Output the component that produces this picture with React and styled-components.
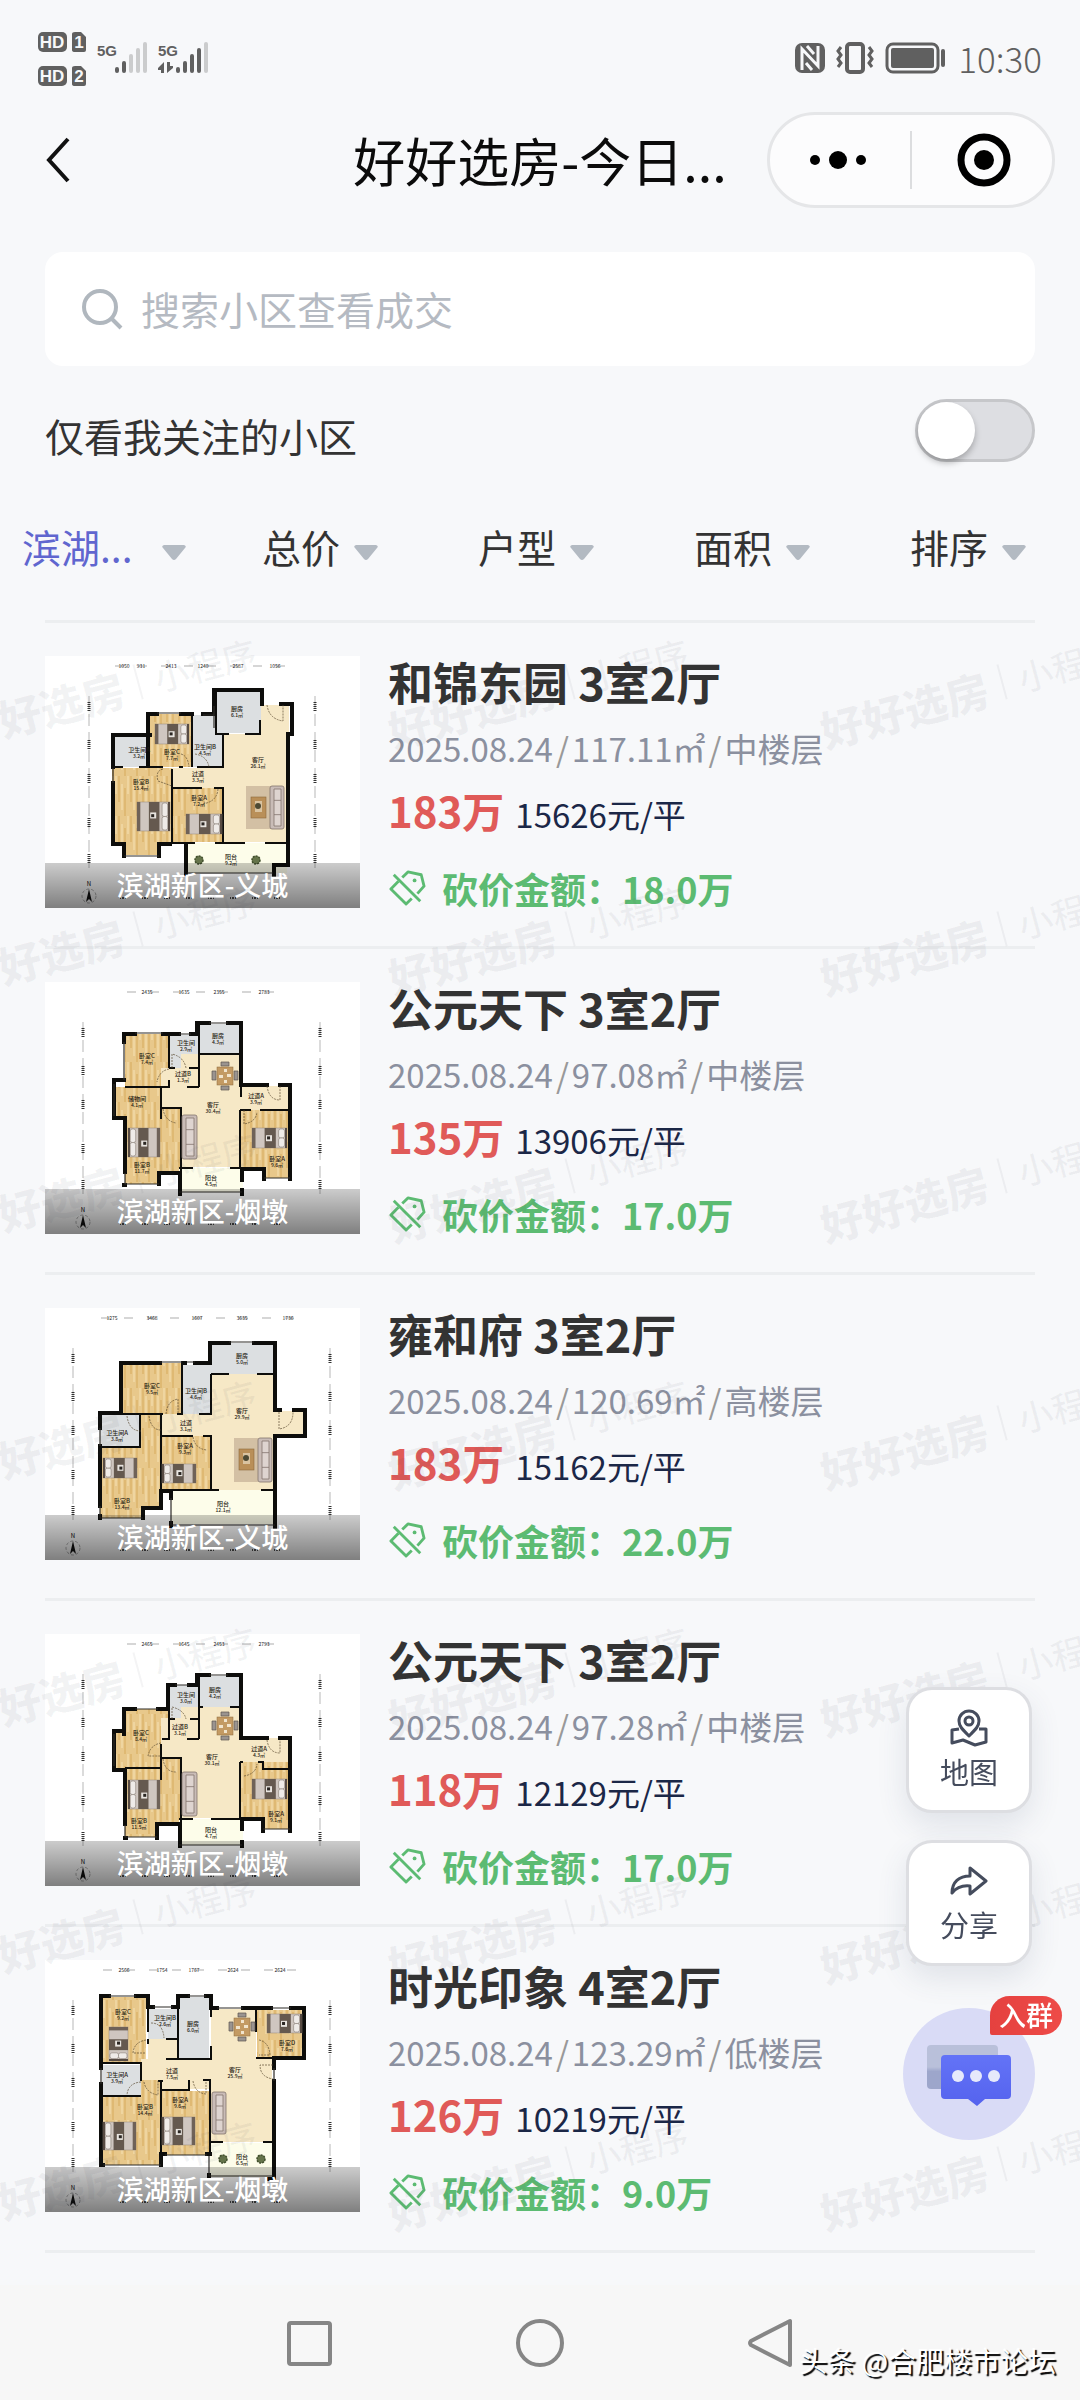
import { Fragment } from "react";
import styled, { createGlobalStyle } from "styled-components";

const GlobalStyle = createGlobalStyle`
    * {
        box-sizing: border-box;
    }
    body {
        margin: 0;
        background: #f7f8fa;
        color: #333333;
        font-family: "Noto Sans CJK SC", "Noto Sans", sans-serif;
    }
    button, input, select {
        font-family: inherit;
        color: inherit;
        margin: 0;
        padding: 0;
        border: 0;
        background: none;
        outline: none;
    }
    h1, h2, p, ul {
        margin: 0;
        padding: 0;
    }
`;

const Page = styled.div`
    display: flex;
    flex-direction: column;
    min-height: 100vh;
    overflow: hidden;
`;

const StatusBar = styled.div`
    display: flex;
    justify-content: space-between;
    align-items: center;
    height: 112px;
    padding: 4px 38px 0 38px;
    color: #606060;
`;

const StatusGroup = styled.div`
    display: flex;
    align-items: center;
    gap: 10px;
`;

const Clock = styled.span`
    margin-left: 2px;
    font-size: 35px;
    line-height: 40px;
    font-weight: 300;
`;

const Header = styled.header`
    display: grid;
    grid-template-columns: 288px 1fr 288px;
    align-items: center;
    padding: 0 25px;
`;

const BackButton = styled.button`
    display: flex;
    align-items: center;
    width: 80px;
    height: 96px;
    padding-left: 19px;
`;

const Title = styled.h1`
    color: #0b0b0b;
    font-size: 52px;
    line-height: 72px;
    font-weight: 400;
    text-align: center;
    white-space: nowrap;
`;

const Capsule = styled.div`
    display: flex;
    align-items: center;
    height: 96px;
    border: 3px solid #e5e6e8;
    border-radius: 48px;
    background: #fcfcfd;
`;

const CapsuleButton = styled.button`
    display: flex;
    flex: 1;
    align-items: center;
    justify-content: center;
    height: 58px;
    padding-right: 4px;
    & + & {
        padding: 0 0 0 4px;
        border-left: 2px solid #dcdddf;
    }
`;

const SearchBox = styled.label`
    display: flex;
    align-items: center;
    gap: 18px;
    height: 114px;
    margin: 44px 45px 0;
    padding: 0 36px;
    border-radius: 18px;
    background: #ffffff;
`;

const SearchInput = styled.input`
    flex: 1;
    min-width: 0;
    padding-bottom: 2px;
    font-size: 39px;
    line-height: 54px;
    &::placeholder {
        color: #b5bac2;
        opacity: 1;
    }
`;

const FollowRow = styled.div`
    display: flex;
    justify-content: space-between;
    align-items: flex-end;
    height: 63px;
    margin: 33px 45px 0;
`;

const FollowLabel = styled.label`
    font-size: 39px;
    line-height: 54px;
`;

const Switch = styled.input`
    appearance: none;
    display: flex;
    align-items: center;
    width: 120px;
    height: 63px;
    padding: 0 1px;
    border: 3px solid #c6c7ca;
    border-radius: 32px;
    background: #dddee2;
    &::before {
        content: "";
        width: 57px;
        height: 57px;
        margin-left: -1px;
        border-radius: 50%;
        background: #ffffff;
        box-shadow: 0 4px 6px rgba(0, 0, 0, 0.25);
    }
    &:checked {
        background: #5b62d6;
        justify-content: flex-end;
    }
`;

const Filters = styled.div`
    display: grid;
    grid-template-columns: repeat(5, 1fr);
    height: 158px;
    padding-top: 10px;
`;

const Filter = styled.label`
    display: flex;
    align-items: center;
    justify-content: center;
    gap: 12px;
    padding-right: 8px;
`;

const FilterSelect = styled.select`
    appearance: none;
    width: ${(props) => (props.$active ? "128px" : "80px")};
    height: 56px;
    font-size: 39px;
    line-height: 56px;
    color: ${(props) => (props.$active ? "#6066cf" : "#333333")};
`;

const Arrow = styled.svg`
    width: 24px;
    height: 15px;
    margin-top: 12px;
`;

const ListArea = styled.main`
    position: relative;
    padding: 0 45px 32px;
`;

const List = styled.ul`
    list-style: none;
    border-top: 3px solid #eceef0;
`;

const Card = styled.li`
    display: flex;
    gap: 28px;
    padding: 33px 0 38px;
    border-bottom: 3px solid #eceef0;
`;

const Thumb = styled.figure`
    position: relative;
    flex: none;
    width: 315px;
    height: 252px;
    margin: 0;
    background: #ffffff;
    svg {
        display: block;
    }
`;

const Caption = styled.figcaption`
    position: absolute;
    left: 0;
    right: 0;
    bottom: 0;
    height: 45px;
    color: #ffffff;
    font-size: 27px;
    line-height: 43px;
    font-weight: 500;
    text-align: center;
    background: linear-gradient(rgba(0, 0, 0, 0.2), rgba(0, 0, 0, 0.5));
`;

const Info = styled.div`
    flex: 1;
    white-space: nowrap;
`;

const Name = styled.h2`
    font-size: 45px;
    line-height: 52px;
    font-weight: 700;
`;

const Meta = styled.p`
    display: flex;
    margin: 20px 0;
    color: #8b909f;
    font-size: 33px;
    line-height: 40px;
`;

const Slash = styled.span`
    margin: 0 3px;
    color: #999999;
`;

const Price = styled.p`
    display: flex;
    align-items: baseline;
    gap: 11px;
    height: 48px;
    color: #1b2747;
    font-size: 33px;
    line-height: 44px;
    strong {
        color: #e05a58;
        font-size: 42px;
    }
`;

const Cut = styled.p`
    display: flex;
    align-items: center;
    gap: 16px;
    margin-top: 34px;
    color: #5cbb72;
    font-size: 36px;
    line-height: 36px;
    font-weight: 700;
`;

// repeated brand mark lying over the whole list
const Watermark = styled.div`
    position: absolute;
    top: -54px;
    bottom: 0;
    left: -108px;
    right: -108px;
    display: grid;
    grid-template-columns: repeat(auto-fill, 432px);
    grid-auto-rows: 247px;
    overflow: hidden;
    pointer-events: none;
    color: rgba(60, 64, 80, 0.06);
`;

const Mark = styled.div`
    display: flex;
    align-items: center;
    justify-content: center;
    gap: 15px;
    padding-right: 4px;
    font-size: 35px;
    line-height: 50px;
    font-weight: 500;
    white-space: nowrap;
    transform: rotate(-15deg);
    b {
        font-size: 43px;
        font-weight: 900;
    }
    i {
        width: 2px;
        height: 36px;
        background: currentColor;
    }
`;

const FloatStack = styled.aside`
    position: fixed;
    right: 45px;
    bottom: 260px;
    display: flex;
    flex-direction: column;
    align-items: center;
    gap: 27px;
`;

const FloatButton = styled.button`
    display: flex;
    flex-direction: column;
    align-items: center;
    justify-content: center;
    gap: 4px;
    width: 126px;
    height: 126px;
    border: 3px solid #dddee2;
    border-radius: 26px;
    color: #454c5d;
    font-size: 29px;
    line-height: 40px;
    background: #ffffff;
    box-shadow: 0 12px 30px rgba(60, 70, 110, 0.12);
`;

const ChatButton = styled.button`
    position: relative;
    width: 132px;
    height: 132px;
    margin-top: 15px;
    border-radius: 50%;
    background: #d9dbf6;
`;

const Badge = styled.span`
    position: absolute;
    top: -12px;
    right: -27px;
    width: 72px;
    height: 39px;
    border-radius: 20px 20px 20px 2px;
    color: #ffffff;
    font-size: 27px;
    line-height: 37px;
    font-weight: 500;
    background: linear-gradient(90deg, #e5413f, #ee4b48);
`;

const NavBar = styled.nav`
    position: relative;
    display: flex;
    flex: none;
    align-items: center;
    justify-content: center;
    gap: 181px;
    height: 115px;
    margin-top: auto;
    background: #f7f7f7;
`;

const NavButton = styled.button`
    display: flex;
    width: 50px;
    height: 50px;
`;

const Credit = styled.span`
    position: absolute;
    right: 24px;
    bottom: 20px;
    color: #ffffff;
    font-size: 28px;
    line-height: 40px;
    text-shadow: 2px 2px 1px #000000;
`;

const FLOORS = {
    wood: "url(#planks)",
    cream: "#f6e8c6",
    tile: "#dcdfe1",
    terrace: "#fdfdea",
};

const listings = [
    {
        name: "和锦东园 3室2厅",
        area: "117.11㎡",
        floor: "中楼层",
        price: "183万",
        unit: "15626元/平",
        cut: "18.0万",
        place: "滨湖新区-义城",
        plan: {
            floors: [
                ["wood", 67, 112, 60, 75], ["wood", 79, 186, 34, 13], ["wood", 103, 58, 44, 53],
                ["tile", 68, 80, 36, 31], ["tile", 148, 59, 30, 52], ["tile", 170, 35, 46, 42],
                ["cream", 178, 78, 64, 108], ["cream", 216, 49, 28, 31], ["cream", 127, 112, 52, 20],
                ["wood", 127, 132, 51, 54], ["terrace", 142, 187, 100, 30],
            ],
            walls: "M105 79H94V79H68V111M68 127V188H79V200M114 200V188H125M103 110V58H112M136 58H147M158 58H169V34H217V48M236 48H247V78H243V209H229V219M141 188V218",
            thin: "M67 111H78M94 111H118M134 111H138M152 111H178V78M147 58V111M171 34V78H184M200 78H215V64M127 113V186M127 132H157M169 132H178V186M127 187H150M170 187H200M220 187H242M104 77V111",
            windows: "M112 57H136M158 59H169M79 200H114M68 112V127M142 217H228M169 50V72",
            doors: "M118 113q-8 2 -5 12l14 5M222 49q2 14 16 16V49M136 98q7 2 8 13M150 98q12 2 14 13M173 133q-1 13 -16 15",
            beds: [[110, 68, 34, 20, 0], [92, 146, 33, 29, 0], [141, 158, 36, 20, 0]],
            sofas: [[225, 130, 14, 43]],
            rugs: [[201, 130, 26, 43]],
            plants: [[154, 204], [211, 204]],
            labels: [[192, 55, "厨房", "6.1㎡"], [127, 98, "卧室C", "7.7㎡"], [160, 93, "卫生间B", "4.5㎡"], [94, 96, "卫生间A", "3.2㎡"], [96, 128, "卧室B", "15.4㎡"], [153, 120, "过道", "3.3㎡"], [154, 144, "卧室A", "7.2㎡"], [213, 106, "客厅", "26.1㎡"], [186, 203, "阳台", "9.2㎡"]],
            top: [[79, "1050"], [96, "931"], [126, "2413"], [158, "1240"], [193, "2587"], [230, "1056"]],
            span: [70, 245],
            sides: [44, 270],
        },
    },
    {
        name: "公元天下 3室2厅",
        area: "97.08㎡",
        floor: "中楼层",
        price: "135万",
        unit: "13906元/平",
        cut: "17.0万",
        place: "滨湖新区-烟墩",
        plan: {
            floors: [
                ["wood", 80, 52, 44, 53], ["tile", 125, 53, 28, 33], ["cream", 116, 86, 38, 40],
                ["tile", 153, 42, 42, 30], ["cream", 136, 72, 60, 113], ["cream", 195, 104, 50, 24],
                ["wood", 70, 105, 46, 32], ["wood", 80, 126, 56, 65], ["wood", 80, 190, 35, 12],
                ["wood", 196, 128, 48, 60], ["wood", 219, 186, 26, 10], ["terrace", 134, 186, 64, 24],
            ],
            walls: "M79 60V52H90M118 52H134M146 52H152V41H164M183 41H196V103H222M235 103H245V197M219 197V187H197V198M79 98H69V136H80V190M79 203H80M114 202V191H135V212M197 208V212",
            thin: "M124 52V86M124 86H130M144 86H153M154 41V105M154 72H195M80 105H124V98M142 105H154M116 105V137M116 126H136V191M196 105V115M195 128H206M215 128H245M195 128V186M134 186H148M185 186H197",
            windows: "M90 51H118M79 60V98M134 52H146M164 41H183M69 102V134M80 191V202H114M134 210H197M219 196H245",
            doors: "M127 86V72q12 3 14 14M124 87q-10 2 -12 13M118 127q2 12 13 14M222 104q2 14 13 14V104M199 128v14q12 -2 13 -12",
            beds: [[83, 146, 32, 29, 180], [207, 146, 35, 20, 0]],
            sofas: [[137, 133, 15, 44]],
            dining: [[180, 94]],
            labels: [[102, 76, "卧室C", "7.4㎡"], [141, 63, "卫生间", "2.9㎡"], [173, 56, "厨房", "4.3㎡"], [138, 94, "过道B", "1.3㎡"], [92, 119, "储物间", "4.1㎡"], [168, 125, "客厅", "30.4㎡"], [211, 116, "过道A", "3.9㎡"], [97, 185, "卧室B", "11.7㎡"], [232, 179, "卧室A", "9.6㎡"], [166, 198, "阳台", "4.5㎡"]],
            top: [[102, "2435"], [139, "1635"], [174, "2355"], [219, "2783"]],
            span: [82, 242],
            sides: [38, 275],
        },
    },
    {
        name: "雍和府 3室2厅",
        area: "120.69㎡",
        floor: "高楼层",
        price: "183万",
        unit: "15162元/平",
        cut: "22.0万",
        place: "滨湖新区-义城",
        plan: {
            floors: [
                ["wood", 76, 55, 60, 52], ["tile", 137, 57, 29, 49], ["tile", 166, 35, 63, 31],
                ["cream", 166, 66, 64, 116], ["cream", 229, 103, 31, 24], ["tile", 55, 107, 40, 32],
                ["wood", 95, 107, 21, 76], ["wood", 55, 140, 44, 70], ["wood", 98, 180, 17, 20],
                ["cream", 116, 106, 50, 22], ["wood", 116, 128, 50, 54], ["terrace", 126, 182, 103, 34],
            ],
            walls: "M115 55H76V105H55V120M55 138V198M55 208V210M98 210V200H116V183H126V190M126 215V218M138 55H140M150 55H165V35H184M209 35H230V102H235M249 102H260V128H230V219",
            thin: "M76 106H118M132 106H138M154 106H166V66M137 55V106M166 66H184M212 66H229M95 107V139H55M116 106V183M116 128H148M158 128H166V182H116M174 182H167M216 182H230",
            windows: "M115 54H137M142 54H150M184 34H209M55 120V138M55 198V210H98M126 190V217H230",
            doors: "M82 108q2 15 14 15M104 108q2 14 12 14M121 106q1 -13 12 -15V106M148 129q2 12 14 13M234 104v17q14 -2 14 -17",
            beds: [[58, 150, 34, 20, 180], [117, 156, 34, 19, 180]],
            sofas: [[213, 130, 14, 44]],
            rugs: [[189, 130, 24, 44]],
            labels: [[107, 80, "卧室C", "9.5㎡"], [151, 85, "卫生间B", "4.6㎡"], [197, 50, "厨房", "5.0㎡"], [197, 105, "客厅", "29.9㎡"], [72, 127, "卫生间A", "3.8㎡"], [141, 117, "过道", "3.1㎡"], [140, 140, "卧室A", "9.3㎡"], [77, 195, "卧室B", "13.4㎡"], [178, 198, "阳台", "12.1㎡"]],
            top: [[67, "1275"], [107, "3468"], [152, "1607"], [197, "3635"], [243, "1736"]],
            span: [56, 258],
            sides: [28, 285],
        },
    },
    {
        name: "公元天下 3室2厅",
        area: "97.28㎡",
        floor: "中楼层",
        price: "118万",
        unit: "12129元/平",
        cut: "17.0万",
        place: "滨湖新区-烟墩",
        plan: {
            floors: [
                ["wood", 80, 75, 43, 58], ["wood", 70, 98, 12, 36], ["tile", 123, 51, 30, 33],
                ["cream", 116, 84, 38, 40], ["tile", 153, 42, 42, 31], ["cream", 136, 73, 60, 111],
                ["cream", 195, 104, 50, 31], ["wood", 80, 124, 56, 66], ["wood", 80, 189, 33, 14],
                ["wood", 196, 128, 48, 58], ["wood", 218, 184, 27, 11], ["terrace", 134, 185, 64, 26],
            ],
            walls: "M79 100V75H90M113 75H123V51H130M144 51H152V41H164M183 41H196V104H222M235 104H245V197M218 197V185H197V195M79 97H69V136H80V190M80 204H81M112 204V190H135V212M197 208V212",
            thin: "M124 51V105H117M124 85H130M145 85H153M154 41V105M154 73H158M185 73H195M142 105H154M116 110V146M80 134H116M116 124H136V190M195 128H198M213 128H218V135H245M195 128V185M134 185H148M166 185H197",
            windows: "M90 75H113M130 51H144M164 41H183M69 100V132M80 191V203H112M134 211H197M218 195H245",
            doors: "M127 85V73q12 3 14 12M116 109q-11 2 -13 13h13M118 125q2 13 13 13M222 106q2 13 13 13V106M199 142q12 -2 13 -12",
            beds: [[83, 146, 32, 29, 180], [207, 145, 35, 20, 0]],
            sofas: [[137, 138, 15, 44]],
            dining: [[180, 92]],
            labels: [[96, 101, "卧室C", "8.4㎡"], [141, 63, "卫生间", "3.0㎡"], [170, 58, "厨房", "4.2㎡"], [135, 95, "过道B", "3.1㎡"], [167, 125, "客厅", "30.1㎡"], [214, 117, "过道A", "4.3㎡"], [94, 189, "卧室B", "11.5㎡"], [231, 182, "卧室A", "9.1㎡"], [166, 198, "阳台", "4.7㎡"]],
            top: [[102, "2465"], [139, "1645"], [174, "2453"], [219, "2793"]],
            span: [82, 242],
            sides: [38, 275],
        },
    },
    {
        name: "时光印象 4室2厅",
        area: "123.29㎡",
        floor: "低楼层",
        price: "126万",
        unit: "10219元/平",
        cut: "9.0万",
        place: "滨湖新区-烟墩",
        plan: {
            floors: [
                ["wood", 57, 37, 44, 66], ["tile", 103, 49, 29, 30], ["tile", 134, 37, 30, 61],
                ["cream", 166, 49, 45, 133], ["cream", 103, 79, 30, 20], ["cream", 96, 99, 131, 30],
                ["cream", 166, 120, 61, 62], ["wood", 212, 50, 46, 47], ["tile", 57, 105, 39, 30],
                ["wood", 96, 120, 21, 20], ["wood", 57, 136, 59, 69], ["wood", 117, 131, 48, 64],
                ["terrace", 165, 183, 63, 34],
            ],
            walls: "M64 36H56V108M91 36H103V47H108M128 47H133V36H143M161 36H166V48H172M198 48H226M246 48H259V98H229V108M229 121V219H224M56 124V205H58M116 205V194H120M162 194H165M164 215V218",
            thin: "M103 48V72M56 103H96V121M56 136H96M133 36V99M121 99H166V86M103 79V84M121 79H133M166 48V57M211 48V72M211 98H230M116 121V205M113 121H118M117 130H144V120M144 130V126M158 120H165V196M165 182H178M218 182H228",
            windows: "M64 36H91M108 47H128M143 36H161M172 48H198M226 48H246M56 108V124M58 205H116M120 195H162M164 196V216H228M229 108V121",
            doors: "M106 63q12 0 13 15M101 80q-12 2 -13 13h13M96 122q-13 1 -14 13M99 122q2 11 14 13V121M148 121q2 12 13 13V121M214 80q10 2 11 15h-11M228 105h-13q0 12 13 14",
            beds: [[64, 67, 19, 34, 90], [222, 54, 35, 19, 0], [58, 162, 33, 28, 180], [117, 157, 33, 28, 180]],
            sofas: [[167, 132, 14, 42]],
            dining: [[197, 67]],
            plants: [[178, 199], [216, 199]],
            labels: [[78, 54, "卧室C", "9.2㎡"], [120, 60, "卫生间B", "2.6㎡"], [148, 66, "厨房", "6.0㎡"], [242, 85, "卧室D", "7.6㎡"], [72, 117, "卫生间A", "3.9㎡"], [127, 113, "过道", "7.5㎡"], [190, 112, "客厅", "25.9㎡"], [100, 149, "卧室B", "14.4㎡"], [135, 142, "卧室A", "9.6㎡"], [197, 199, "阳台", "6.5㎡"]],
            top: [[79, "2566"], [117, "1754"], [149, "1767"], [188, "2624"], [235, "2624"]],
            span: [58, 257],
            sides: [28, 285],
        },
    },
];

const filters = [
    { label: "区域", value: "滨湖...", active: true },
    { label: "总价", value: "总价" },
    { label: "户型", value: "户型" },
    { label: "面积", value: "面积" },
    { label: "排序", value: "排序" },
];

// the pillow end is on the right, turn is in degrees
const Bed = ({ box: [x, y, w, h, turn] }) => {
    const long = turn === 90 ? h : w;
    const wide = turn === 90 ? w : h;
    return (
        <g transform={`translate(${x + w / 2} ${y + h / 2}) rotate(${turn}) translate(${-long / 2} ${-wide / 2})`}>
            <rect width={long} height={wide} fill="#cfc6c0" stroke="#93877c" strokeWidth="0.5" />
            <rect width={long * 0.1} height={wide} fill="#6f6258" />
            <rect x={long * 0.36} width={long * 0.32} height={wide} fill="#65594f" />
            <rect x={long * 0.4} y={wide * 0.36} width="6" height="6" fill="#e9e5e0" />
            <rect x={long * 0.43} y={wide * 0.42} width="3" height="3" fill="#2b2622" />
            <rect x={long * 0.76} y="1" width={long * 0.17} height={wide / 2 - 1} rx="2" fill="#efebe8" stroke="#877c73" strokeWidth="0.6" />
            <rect x={long * 0.76} y={wide / 2} width={long * 0.17} height={wide / 2 - 1} rx="2" fill="#efebe8" stroke="#877c73" strokeWidth="0.6" />
            <rect x={long - 2} width="2" height={wide} fill="#574b43" />
        </g>
    );
};

const Sofa = ({ box: [x, y, w, h] }) => (
    <g fill="#c9bcb7" stroke="#83746d" strokeWidth="0.8">
        <rect x={x} y={y} width={w} height={h} rx="2" />
        <path d={`M${x + 4} ${y + 3}h${w - 7}v${h - 6}h${7 - w}zM${x + 4} ${y + h / 3}h${w - 7}M${x + 4} ${y + (h * 2) / 3}h${w - 7}`} fill="#ded4d0" />
    </g>
);

const Dining = ({ at: [x, y] }) => (
    <g transform={`translate(${x} ${y})`}>
        <path d="M-4 -14h8v4h-8zM-4 10h8v4h-8zM-13 -5h4v9h-4zM9 -5h4v9h-4z" fill="#9a9490" stroke="#5d554e" strokeWidth="0.7" />
        <rect x="-8" y="-9" width="16" height="18" fill="#c39a63" stroke="#8d6a3c" strokeWidth="0.5" />
        <path d="M-6 -1h4v3h-4zM2 -2h4v3h-4zM-1 -7h3v3h-3zM-1 4h3v3h-3z" fill="#f1e4cc" />
    </g>
);

const FloorPlan = ({ plan }) => (
    <svg width="315" height="252" viewBox="0 0 315 252" aria-hidden="true" fontSize="6" textAnchor="middle">
        <defs>
            <pattern id="planks" width="12" height="40" patternUnits="userSpaceOnUse">
                <rect width="12" height="40" fill="#e8c88b" />
                <path d="M2 0V26M8 12V40" stroke="#dfb973" strokeWidth="2" />
                <path d="M5 8V34M11 0V18" stroke="#efd5a0" strokeWidth="2" />
            </pattern>
        </defs>
        {plan.floors.map(([kind, x, y, w, h], i) => (
            <rect key={i} x={x} y={y} width={w} height={h} fill={FLOORS[kind]} />
        ))}
        {plan.rugs?.map(([x, y, w, h]) => (
            <g key={x}>
                <rect x={x} y={y} width={w} height={h} fill="#d3c0a4" />
                <rect x={x + 5} y={y + 11} width="15" height="21" fill="#b98f58" stroke="#8d6a3c" strokeWidth="0.6" />
                <rect x={x + 9} y={y + 15} width="7" height="11" fill="#d9c3a0" />
                <circle cx={x + 12} cy={y + 20} r="3" fill="#4d4a34" />
            </g>
        ))}
        <path d={plan.walls} fill="none" stroke="#0d0d0b" strokeWidth="4" strokeLinecap="square" />
        <path d={plan.thin} fill="none" stroke="#0d0d0b" strokeWidth="2" />
        <path d={plan.windows} fill="none" stroke="#2d2b27" strokeWidth="1.2" />
        <path d={plan.doors} fill="none" stroke="#5b4c32" strokeWidth="0.7" strokeDasharray="2 1" />
        {plan.beds.map((box) => <Bed key={box.join()} box={box} />)}
        {plan.sofas.map((box) => <Sofa key={box.join()} box={box} />)}
        {plan.dining?.map((at) => <Dining key={at.join()} at={at} />)}
        {plan.plants?.map(([x, y]) => (
            <circle key={x} cx={x} cy={y} r="4" fill="#65744a" stroke="#3f4d2b" strokeWidth="1.5" strokeDasharray="2 1" />
        ))}
        <g fill="#1f1a12" fontWeight="500">
            {plan.labels.map(([x, y, name, size]) => (
                <Fragment key={x + name}>
                    <text x={x} y={y}>{name}</text>
                    <text x={x} y={y + 6} fontSize="5">{size}</text>
                </Fragment>
            ))}
        </g>
        <path d={`M${plan.span[0]} 10H${plan.span[1]}`} stroke="#8b8b8b" strokeWidth="0.7" strokeDasharray="9 14" />
        <g fill="#222222" fontSize="5">
            {plan.top.map(([x, size]) => <text key={x} x={x} y="12">{size}</text>)}
        </g>
        {plan.sides.map((x) => (
            <g key={x}>
                <path d={`M${x} 40V212`} stroke="#9a9a9a" strokeWidth="0.7" strokeDasharray="12 6" />
                <path d={`M${x} 46V56M${x} 84V93M${x} 118V127M${x} 162V172M${x} 198V208`} stroke="#333333" strokeWidth="3" strokeDasharray="1 1" />
            </g>
        ))}
        <g transform={`translate(${plan.sides[0]} 240)`}>
            <circle r="7" fill="none" stroke="#777777" strokeWidth="0.6" strokeDasharray="3 2" />
            <path d="M0 -7L3 6L0 3L-3 6Z" fill="#111111" />
            <text y="-10" fontSize="6">N</text>
        </g>
        <path d="M75 242H240" stroke="#555555" strokeWidth="2" strokeDasharray="1 1 2 1 1 16" />
    </svg>
);

const CutIcon = () => (
    <svg width="38" height="36" viewBox="0 0 40 38" fill="none" stroke="currentColor" strokeWidth="3" strokeLinejoin="round" aria-hidden="true">
        <path d="M15 8L21 2L35 5L38 17L31 25M11 12L3 20L19 36L25 30" />
        <path d="M6 5L34 33" />
        <circle cx="28" cy="11" r="2" fill="currentColor" stroke="none" />
    </svg>
);

const Listing = ({ item }) => (
    <Card>
        <Thumb>
            <FloorPlan plan={item.plan} />
            <Caption>{item.place}</Caption>
        </Thumb>
        <Info>
            <Name>{item.name}</Name>
            <Meta>
                <span>2025.08.24</span>
                <Slash>/</Slash>
                <span>{item.area}</span>
                <Slash>/</Slash>
                <span>{item.floor}</span>
            </Meta>
            <Price>
                <strong>{item.price}</strong>
                <span>{item.unit}</span>
            </Price>
            <Cut>
                <CutIcon />
                <span>砍价金额：{item.cut}</span>
            </Cut>
        </Info>
    </Card>
);

const SignalIcons = () => (
    <svg width="172" height="56" viewBox="38 30 172 56" fill="#606060" fontFamily="'Liberation Sans Narrow', 'Liberation Sans', sans-serif" fontWeight="700" aria-label="信号">
        <rect x="38" y="32" width="29" height="20" rx="5" />
        <path d="M72 34q0 -2 3 -2h6l5 5v13q0 2 -2 2h-9q-3 0 -3 -2z" />
        <rect x="38" y="66" width="29" height="20" rx="5" />
        <path d="M72 68q0 -2 3 -2h6l5 5v13q0 2 -2 2h-9q-3 0 -3 -2z" />
        <g fill="#f7f8fa" fontSize="17" textAnchor="middle">
            <text x="52" y="48">HD</text>
            <text x="79" y="48">1</text>
            <text x="52" y="82">HD</text>
            <text x="79" y="82">2</text>
        </g>
        <text x="97" y="56" fontSize="15">5G</text>
        <text x="158" y="56" fontSize="15">5G</text>
        <path d="M117 69v2M124 63v8M178 69v2M185 63v8M192 56v15M199 50v21" fill="none" stroke="#606060" strokeWidth="4" strokeLinecap="round" />
        <path d="M131 56v15M138 50v21M145 44v27M206 44v27" fill="none" stroke="#cbcccd" strokeWidth="4" strokeLinecap="round" />
        <path d="M164 73V62L158 68V70H161V73ZM167 62V73L173 68V66H170V62Z" />
    </svg>
);

const DeviceIcons = () => (
    <svg width="152" height="34" viewBox="794 41 152 34" fill="none" stroke="#606060" aria-label="设备状态">
        <rect x="795" y="43" width="30" height="30" rx="7" fill="#606060" stroke="none" />
        <path d="M802 70V49L818 66V46M807 46L814 54M806 63L812 70" stroke="#f7f8fa" strokeWidth="3" />
        <rect x="847" y="44" width="16" height="28" rx="3" strokeWidth="4" />
        <path d="M841 47l-3 4l3 4l-3 4l3 4l-3 4M869 47l3 4l-3 4l3 4l-3 4l3 4" strokeWidth="3" />
        <rect x="887" y="44" width="51" height="28" rx="6" strokeWidth="3" />
        <rect x="891" y="48" width="43" height="20" rx="2" fill="#606060" stroke="none" />
        <path d="M943 51v14" strokeWidth="4" strokeLinecap="round" />
    </svg>
);

const ChatIcon = () => (
    <svg width="132" height="132" viewBox="0 0 132 132" aria-hidden="true">
        <defs>
            <linearGradient id="back" x1="0" y1="0" x2="0" y2="1">
                <stop offset="0.5" stopColor="#b9c0da" />
                <stop offset="0.6" stopColor="#9da6cb" />
            </linearGradient>
            <linearGradient id="front" x1="0" y1="0" x2="0" y2="1">
                <stop offset="0" stopColor="#6373f7" />
                <stop offset="1" stopColor="#5563ee" />
            </linearGradient>
        </defs>
        <rect x="24" y="37" width="71" height="44" rx="4" fill="url(#back)" />
        <path d="M42 47h62q4 0 4 4v36q0 4 -4 4h-22l-8 7l-9 -7h-23q-4 0 -4 -4v-36q0 -4 4 -4z" fill="url(#front)" />
        <g fill="#e6e9fb">
            <circle cx="55" cy="68" r="6" />
            <circle cx="73" cy="68" r="6" />
            <circle cx="91" cy="68" r="6" />
        </g>
    </svg>
);

const App = () => (
    <Page>
        <GlobalStyle />
        <StatusBar>
            <SignalIcons />
            <StatusGroup>
                <DeviceIcons />
                <Clock>10:30</Clock>
            </StatusGroup>
        </StatusBar>
        <Header>
            <BackButton aria-label="返回">
                <svg width="28" height="48" viewBox="0 0 28 48" fill="none" stroke="#111111" strokeWidth="4">
                    <path d="M24 3L5 24L24 45" />
                </svg>
            </BackButton>
            <Title>好好选房-今日...</Title>
            <Capsule>
                <CapsuleButton aria-label="更多">
                    <svg width="58" height="20" viewBox="0 0 58 20">
                        <circle cx="6" cy="10" r="5" />
                        <circle cx="29" cy="10" r="9" />
                        <circle cx="52" cy="10" r="5" />
                    </svg>
                </CapsuleButton>
                <CapsuleButton aria-label="关闭">
                    <svg width="54" height="54" viewBox="0 0 54 54">
                        <circle cx="27" cy="27" r="23" fill="none" stroke="#000000" strokeWidth="7" />
                        <circle cx="27" cy="27" r="10" />
                    </svg>
                </CapsuleButton>
            </Capsule>
        </Header>
        <SearchBox>
            <svg width="42" height="42" viewBox="0 0 42 42" fill="none" stroke="#b0b7be" strokeWidth="4" aria-hidden="true">
                <circle cx="19" cy="19" r="16" />
                <path d="M31 31L40 40" />
            </svg>
            <SearchInput type="text" placeholder="搜索小区查看成交" aria-label="搜索小区" />
        </SearchBox>
        <FollowRow>
            <FollowLabel htmlFor="followed">仅看我关注的小区</FollowLabel>
            <Switch id="followed" type="checkbox" role="switch" />
        </FollowRow>
        <Filters>
            {filters.map((filter) => (
                <Filter key={filter.label}>
                    <FilterSelect $active={filter.active} aria-label={filter.label}>
                        <option>{filter.value}</option>
                    </FilterSelect>
                    <Arrow viewBox="0 0 24 15" aria-hidden="true">
                        <path d="M2 0h20q3 1 1 3L14 14q-2 2 -4 0L1 3q-2 -2 1 -3z" fill="#b3bac2" />
                    </Arrow>
                </Filter>
            ))}
        </Filters>
        <ListArea>
            <List>
                {listings.map((item, i) => <Listing key={i} item={item} />)}
            </List>
            <Watermark aria-hidden="true">
                {Array.from({ length: 21 }, (_, i) => (
                    <Mark key={i}>
                        <b>好好选房</b>
                        <i />
                        <span>小程序</span>
                    </Mark>
                ))}
            </Watermark>
        </ListArea>
        <FloatStack>
            <FloatButton>
                <svg width="38" height="38" viewBox="0 0 38 38" fill="none" stroke="#454c5d" strokeWidth="3" strokeLinejoin="round" aria-hidden="true">
                    <path d="M19 27C12 20 9 17 9 12a10 10 0 0 1 20 0C29 17 26 20 19 27Z" />
                    <circle cx="19" cy="12" r="4" />
                    <path d="M9 20L2 21V34L13 31L25 36L36 33V20L29 20" />
                </svg>
                地图
            </FloatButton>
            <FloatButton>
                <svg width="38" height="38" viewBox="0 0 38 38" fill="none" stroke="#454c5d" strokeWidth="3" strokeLinejoin="round" aria-hidden="true">
                    <path d="M20 6L36 19L20 32V24C11 23 6 26 2 31C2 20 9 14 20 14Z" />
                </svg>
                分享
            </FloatButton>
            <ChatButton aria-label="入群">
                <ChatIcon />
                <Badge>入群</Badge>
            </ChatButton>
        </FloatStack>
        <NavBar>
            <NavButton aria-label="最近任务">
                <svg width="50" height="50" fill="none" stroke="#868686" strokeWidth="4">
                    <rect x="5" y="5" width="41" height="41" rx="2" />
                </svg>
            </NavButton>
            <NavButton aria-label="主页">
                <svg width="50" height="50" fill="none" stroke="#868686" strokeWidth="4">
                    <circle cx="25" cy="25" r="22" />
                </svg>
            </NavButton>
            <NavButton aria-label="返回上一页">
                <svg width="50" height="50" fill="none" stroke="#868686" strokeWidth="4" strokeLinejoin="round">
                    <path d="M44 3V47L5 27Q3 25 5 23Z" />
                </svg>
            </NavButton>
            <Credit>头条 @合肥楼市论坛</Credit>
        </NavBar>
    </Page>
);

export default App;
